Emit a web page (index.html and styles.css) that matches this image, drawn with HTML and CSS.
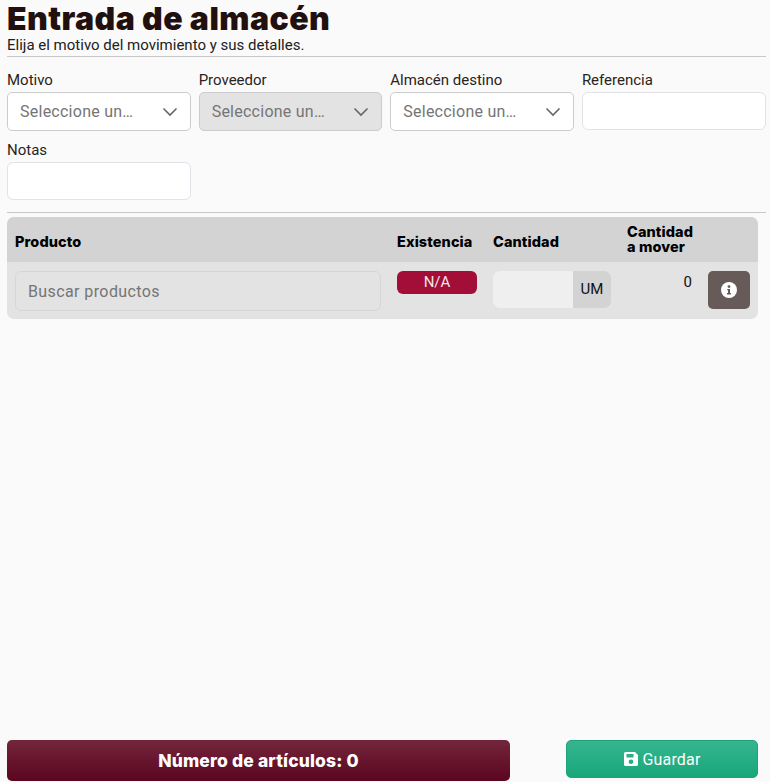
FILE: index.html
```html
<!DOCTYPE html>
<html lang="es">
<head>
<meta charset="utf-8">
<title>Entrada de almacén</title>
<link rel="stylesheet" href="styles.css">
</head>
<body>
<main class="page">
  <header class="page-head">
    <h1 class="title">Entrada de almacén</h1>
    <p class="subtitle">Elija el motivo del movimiento y sus detalles.</p>
  </header>
  <hr class="rule rule-top">
  <section class="form-grid">
    <div class="field">
      <label class="field-label">Motivo</label>
      <div class="select"><span class="select-text">Seleccione un…</span><svg class="chevron" viewBox="0 0 16 10"><path d="M1.5 1.500 8 8l6.500-6.500"/></svg></div>
    </div>
    <div class="field">
      <label class="field-label">Proveedor</label>
      <div class="select select-disabled"><span class="select-text">Seleccione un…</span><svg class="chevron" viewBox="0 0 16 10"><path d="M1.5 1.500 8 8l6.500-6.500"/></svg></div>
    </div>
    <div class="field">
      <label class="field-label">Almacén destino</label>
      <div class="select"><span class="select-text">Seleccione un…</span><svg class="chevron" viewBox="0 0 16 10"><path d="M1.5 1.500 8 8l6.500-6.500"/></svg></div>
    </div>
    <div class="field">
      <label class="field-label">Referencia</label>
      <input class="text-input" type="text">
    </div>
    <div class="field">
      <label class="field-label">Notas</label>
      <input class="text-input" type="text">
    </div>
  </section>
  <hr class="rule rule-mid">
  <section class="table">
    <div class="table-row table-head">
      <div>Producto</div>
      <div>Existencia</div>
      <div>Cantidad</div>
      <div class="th-two">Cantidad<br>a mover</div>
      <div></div>
    </div>
    <div class="table-row table-body">
      <input class="search" type="text" placeholder="Buscar productos" disabled>
      <div class="pill">N/A</div>
      <div class="qty"><span class="qty-input"></span><span class="qty-unit">UM</span></div>
      <div class="move">0</div>
      <button class="info-btn" type="button" aria-label="Información">
        <svg class="info-icon" viewBox="0 0 16 16"><circle cx="8" cy="8" r="8" fill="#fff"/><circle cx="8" cy="4.600" r="1.400" fill="#665b58"/><path d="M6.300 7h2.700v4h1v1.400H6v-1.400h1V8.300h-.7z" fill="#665b58"/></svg>
      </button>
    </div>
  </section>
  <footer class="footer">
    <div class="count">Número de artículos: 0</div>
    <button class="save" type="button">
      <svg class="save-icon" viewBox="0 0 16 16"><path fill-rule="evenodd" d="M2.500 1H12l3 3v9.500a1.500 1.500 0 0 1-1.500 1.500h-11A1.500 1.500 0 0 1 1 13.500v-11A1.500 1.500 0 0 1 2.500 1zM3.500 3v3.500h7V3zM8 8.500a2.300 2.300 0 1 0 0 4.600 2.300 2.300 0 0 0 0-4.600z" fill="#fff"/></svg>
      <span>Guardar</span>
    </button>
  </footer>
</main>
</body>
</html>
```
FILE: styles.css
```css
* { box-sizing: border-box; }
html, body { margin: 0; height: 100%; }
body {
  background: #fafafa;
  color: #212529;
  font-family: "Roboto", "Liberation Sans", sans-serif;
  font-size: 15px;
}
.page {
  height: 782px;
  padding: 0 4.500px 1px 7px;
  display: flex;
  flex-direction: column;
}
.page-head { height: 52px; padding-top: 1px; }
.title {
  margin: 0;
  height: 36px;
  font-family: "Inter", "Roboto", sans-serif;
  font-size: 32px;
  line-height: 36px;
  font-weight: 900;
  color: #21100d;
  letter-spacing: 0.45px;
}
.subtitle { margin: 0; line-height: 16px; font-size: 15px; color: #212121; }
.rule { border: 0; border-top: 1px solid #c8c8c8; margin: 0; }
.rule-top { margin-top: 4px; }
.rule-mid { margin-top: 12px; }
.form-grid {
  display: grid;
  grid-template-columns: repeat(4, minmax(0, 1fr));
  column-gap: 8px;
  row-gap: 10px;
  padding-top: 14px;
  align-items: start;
}
.field { display: flex; flex-direction: column; min-width: 0; }
.field-label { height: 21px; line-height: 19px; font-size: 15px; color: #2a2320; }
.select {
  height: 39px;
  display: flex;
  align-items: center;
  justify-content: space-between;
  padding: 0 12px;
  background: #fff;
  border: 1px solid #ccc;
  border-radius: 5px;
  color: #757575;
  font-size: 16px;
  letter-spacing: 0.25px;
}
.select-disabled { background: #e3e3e3; }
.chevron { width: 16px; height: 10px; fill: none; stroke: #666; stroke-width: 1.600; }
.text-input {
  height: 38px;
  width: 100%;
  border: 1px solid #e2e2e8;
  border-radius: 6px;
  background: #fff;
  padding: 0 12px;
}
.table {
  margin-top: 4px;
  width: 751px;
  border-radius: 7px;
  overflow: hidden;
  background: #e3e3e3;
}
.table-row {
  display: grid;
  grid-template-columns: 366px 80px 118px 65px 42px;
  column-gap: 16px;
  padding: 0 8px;
}
.table-head {
  height: 45px;
  padding-top: 4px;
  background: #d3d3d3;
  align-items: center;
  color: #000;
  font-family: "Inter", "Roboto", sans-serif;
  font-weight: 800;
  font-size: 14.500px;
  letter-spacing: 0.1px;
}
.th-two { line-height: 15px; margin-top: -6px; white-space: nowrap; }
.table-body { height: 57px; padding-top: 9px; }
.search {
  height: 40px;
  background: #e3e3e3;
  border: 1px solid #d6d6d6;
  border-radius: 6px;
  padding: 0 12px;
  font: 16px "Roboto", sans-serif;
  letter-spacing: 0.4px;
}
.search::placeholder { color: #757575; opacity: 1; }
.pill {
  height: 23px;
  line-height: 22px;
  border-radius: 6px;
  background: #a20e38;
  color: #f4e4e8;
  text-align: center;
  font-size: 15px;
}
.qty { display: flex; height: 37px; border-radius: 7px; overflow: hidden; }
.qty-input { width: 80px; background: #efefef; }
.qty-unit {
  flex: 1;
  background: #d3d3d3;
  color: #111;
  font-size: 15px;
  line-height: 37px;
  text-align: center;
}
.move { text-align: right; color: #111; line-height: 23px; font-size: 15px; }
.info-btn {
  width: 42px;
  height: 38px;
  padding: 0;
  border: 0;
  border-radius: 5px;
  background: #665b58;
  display: flex;
  align-items: center;
  justify-content: center;
}
.info-icon { width: 16px; height: 16px; }
.footer {
  margin-top: auto;
  width: 751px;
  display: flex;
  justify-content: space-between;
  align-items: flex-start;
}
.count {
  width: 503px;
  height: 41px;
  border-radius: 5px;
  background: linear-gradient(#72263c, #5c0520);
  color: #fff;
  font-family: "Inter", "Roboto", sans-serif;
  font-weight: 800;
  font-size: 17.500px;
  letter-spacing: 0.15px;
  line-height: 41px;
  text-align: center;
}
.save {
  width: 192px;
  height: 38px;
  border: 1px solid #1fa37d;
  border-radius: 5px;
  background: linear-gradient(#36b58e, #18a77a);
  color: #fff;
  font: 16px "Roboto", sans-serif;
  letter-spacing: 0.2px;
  display: flex;
  align-items: center;
  justify-content: center;
  gap: 3px;
}
.save-icon { width: 16px; height: 16px; }
```
